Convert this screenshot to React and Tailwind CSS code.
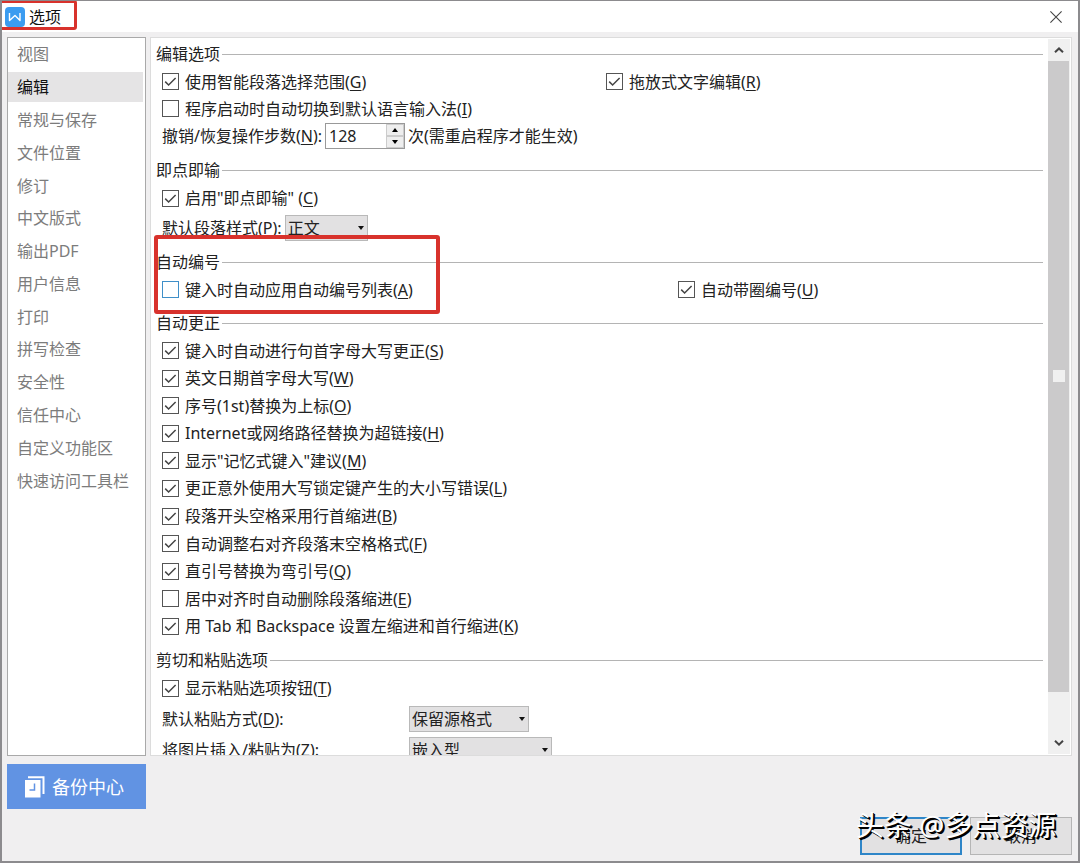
import React from "react";

const categories = [
  "视图", "编辑", "常规与保存", "文件位置", "修订", "中文版式", "输出PDF",
  "用户信息", "打印", "拼写检查", "安全性", "信任中心", "自定义功能区", "快速访问工具栏",
];

const corrections = [
  ["键入时自动进行句首字母大写更正", "S", true],
  ["英文日期首字母大写", "W", true],
  ["序号(1st)替换为上标", "O", true],
  ["Internet或网络路径替换为超链接", "H", true],
  ["显示\"记忆式键入\"建议", "M", true],
  ["更正意外使用大写锁定键产生的大小写错误", "L", true],
  ["段落开头空格采用行首缩进", "B", true],
  ["自动调整右对齐段落末空格格式", "F", true],
  ["直引号替换为弯引号", "Q", true],
  ["居中对齐时自动删除段落缩进", "E", false],
  ["用 Tab 和 Backspace 设置左缩进和首行缩进", "K", true],
];

function Key({ k }) {
  return <>(<u className="underline decoration-1 underline-offset-2">{k}</u>)</>;
}

function Check({ text, k, checked = false, focused = false }) {
  return (
    <label className="inline-flex items-center gap-1.5 whitespace-nowrap">
      <span className="grid size-[17px] shrink-0">
        <input
          type="checkbox"
          defaultChecked={checked}
          className={
            "peer col-start-1 row-start-1 size-[17px] appearance-none border bg-white " +
            (focused ? "border-[#3f8fc8]" : "border-[#555555]")
          }
        />
        <svg viewBox="0 0 17 17" className="pointer-events-none invisible col-start-1 row-start-1 size-[17px] peer-checked:visible" fill="none" stroke="#444" strokeWidth="1.5">
          <path d="M3.2 8.6 6.6 12 13.6 5" />
        </svg>
      </span>
      <span>{text}<Key k={k} /></span>
    </label>
  );
}

function Section({ title, children }) {
  return (
    <section className="relative">
      <div className="flex h-7 items-center gap-0.5">
        <h2 className="whitespace-nowrap">{title}</h2>
        <div className="h-px flex-1 bg-[#b4b4b4]" />
      </div>
      {children}
    </section>
  );
}

function Select({ id, options, className }) {
  return (
    <span className={"grid h-[26px] " + className}>
      <select id={id} className="col-start-1 row-start-1 w-full appearance-none border border-[#b9b9b9] bg-[#e2e1e2] pl-0.5 leading-6 text-[#222]">
        {options.map((o) => <option key={o}>{o}</option>)}
      </select>
      <svg viewBox="0 0 6 4" className="pointer-events-none col-start-1 row-start-1 mr-1 h-1 w-1.5 self-center justify-self-end" fill="#111">
        <path d="M0 0h6L3 4z" />
      </svg>
    </span>
  );
}

export default function App() {
  return (
    <div className="relative flex h-screen flex-col overflow-hidden border-x-2 border-t border-b-2 border-[#8c8b8e] bg-[#f0eff0] font-['Noto_Sans','Noto_Sans_CJK_SC',sans-serif] text-[16px] leading-6 text-[#222]">
      <header className="flex h-[31px] shrink-0 items-center justify-between bg-white pr-3.5 pl-[3px]">
        <div className="flex items-center gap-1">
          <svg viewBox="0 0 20 20" className="size-5">
            <rect width="20" height="20" rx="4" fill="#3b9cf0" />
            <path d="M4.5 6v7.5L10 8.5l5 5V6" fill="none" stroke="#fff" strokeWidth="1.4" strokeLinejoin="round" />
          </svg>
          <h1 className="text-[#111]">选项</h1>
        </div>
        <button aria-label="关闭" className="p-0.5">
          <svg viewBox="0 0 12 12" className="size-3" stroke="#444" strokeWidth="1.1">
            <path d="M.4.4l11.2 11.2M11.6.4.4 11.6" />
          </svg>
        </button>
      </header>

      <div className="flex min-h-0 flex-1 gap-1 pt-[5px] pr-1.5 pl-[5px]">
        <nav className="w-[139px] shrink-0 border border-[#a9a9a9] bg-white">
          <ul className="grid h-[459px] auto-rows-fr">
            {categories.map((c, i) => (
              <li key={c} className="flex items-center pr-0.5">
                <button
                  className={
                    "h-[30px] w-full pl-[9px] text-left whitespace-nowrap " +
                    (i === 1 ? "bg-[#e5e4e5] text-[#111]" : "text-[#7c7c7c]")
                  }
                >
                  {c}
                </button>
              </li>
            ))}
          </ul>
        </nav>

        <main className="flex min-w-0 flex-1 border border-[#dcdcdc] bg-white">
          <div className="flex min-w-0 flex-1 flex-col gap-1.5 overflow-hidden pt-0.5 pr-[5px] pl-[5px]">
            <Section title="编辑选项">
              <div className="grid h-[82px] auto-rows-fr pl-1.5">
                <div className="flex items-center">
                  <div className="flex w-[444px]"><Check text="使用智能段落选择范围" k="G" checked /></div>
                  <Check text="拖放式文字编辑" k="R" checked />
                </div>
                <div className="flex items-center"><Check text="程序启动时自动切换到默认语言输入法" k="I" /></div>
                <div className="flex items-center gap-[3px]">
                  <label htmlFor="undo">撤销/恢复操作步数<Key k="N" />:</label>
                  <div className="flex h-[26px] w-20 border border-[#999] bg-white">
                    <input id="undo" defaultValue="128" className="w-0 flex-1 pl-[3px]" />
                    <div className="flex w-[18px] flex-col">
                      <button aria-label="增加" className="flex flex-1 items-center justify-center border border-[#ccc] bg-[#eee]">
                        <svg viewBox="0 0 6 4" className="h-1 w-1.5"><path d="M0 4h6L3 0z" /></svg>
                      </button>
                      <button aria-label="减少" className="flex flex-1 items-center justify-center border border-[#ccc] bg-[#eee]">
                        <svg viewBox="0 0 6 4" className="h-1 w-1.5"><path d="M0 0h6L3 4z" /></svg>
                      </button>
                    </div>
                  </div>
                  <span>次(需重启程序才能生效)</span>
                </div>
              </div>
            </Section>

            <Section title="即点即输">
              <div className="flex flex-col gap-0.5 pl-1.5">
                <div className="flex h-7 items-center"><Check text={'启用"即点即输" '} k="C" checked /></div>
                <div className="flex h-7 items-center gap-[3px]">
                  <label htmlFor="style">默认段落样式<Key k="P" />:</label>
                  <Select id="style" options={["正文"]} className="w-[83px]" />
                </div>
              </div>
            </Section>

            <Section title="自动编号">
              <div className="flex h-[27px] items-center pl-1.5">
                <div className="flex w-[516px]"><Check text="键入时自动应用自动编号列表" k="A" focused /></div>
                <Check text="自动带圈编号" k="U" checked />
              </div>
              <div className="pointer-events-none absolute -top-[13px] -left-0.5 h-[79px] w-[286px] rounded-[3px] border-4 border-[#d8322c]" />
            </Section>

            <Section title="自动更正">
              <div className="grid h-[303px] auto-rows-fr pl-1.5">
                {corrections.map(([text, k, on]) => (
                  <div key={k} className="flex items-center"><Check text={text} k={k} checked={on} /></div>
                ))}
              </div>
            </Section>

            <Section title="剪切和粘贴选项">
              <div className="flex flex-col gap-[3px] pl-1.5">
                <div className="flex h-7 items-center"><Check text="显示粘贴选项按钮" k="T" checked /></div>
                <div className="flex h-7 items-center">
                  <label htmlFor="paste" className="w-[247px]">默认粘贴方式<Key k="D" />:</label>
                  <Select id="paste" options={["保留源格式"]} className="w-[120px]" />
                </div>
                <div className="flex h-7 items-center">
                  <label htmlFor="image" className="w-[247px]">将图片插入/粘贴为<Key k="Z" />:</label>
                  <Select id="image" options={["嵌入型"]} className="w-[143px]" />
                </div>
              </div>
            </Section>
          </div>

          <div className="my-px mr-px flex w-[22px] shrink-0 flex-col bg-[#f0f0f0]">
            <button aria-label="向上滚动" className="flex h-[22px] items-center justify-center">
              <svg viewBox="0 0 10 6" className="h-1.5 w-2.5" fill="none" stroke="#444" strokeWidth="2"><path d="M1 5.2 5 1.4 9 5.2" /></svg>
            </button>
            <div className="flex-1">
              <div className="mr-px flex h-[94%] items-center justify-center bg-[#cbcacb]">
                <div className="size-3 bg-[#f0f0f0]" />
              </div>
            </div>
            <button aria-label="向下滚动" className="flex h-[22px] items-center justify-center">
              <svg viewBox="0 0 10 6" className="h-1.5 w-2.5" fill="none" stroke="#444" strokeWidth="2"><path d="M1 .8 5 4.6 9 .8" /></svg>
            </button>
          </div>
        </main>
      </div>

      <footer className="flex h-[105px] shrink-0 justify-between pt-2 pr-1.5 pb-1.5 pl-[5px]">
        <button className="flex h-[45px] w-[139px] items-center gap-[7px] bg-[#6193e3] pl-[18px] text-[18px] text-white">
          <svg viewBox="0 0 20 22" className="h-[22px] w-5" fill="none">
            <path d="M3 1.2h15.5V18" stroke="#fff" strokeWidth="2" />
            <path d="M0 4h15.5v17.5H0z" fill="#fff" />
            <path d="M9.5 7.5V14H4.5" stroke="#6193e3" strokeWidth="1.5" />
          </svg>
          备份中心
        </button>
        <div className="relative flex items-end gap-2">
          <button className="h-[38px] w-[102px] border-2 border-[#2f86c8] bg-[#e2e1e2]">确定</button>
          <button className="h-[38px] w-[102px] border border-[#b5b5b5] bg-[#e2e1e2]">取消</button>
          <div className="pointer-events-none absolute bottom-3 -left-1 text-[28px] leading-9 whitespace-nowrap text-white [text-shadow:1px_1px_0_#000,2px_2px_0_#000]">
            头条 @多点资源
          </div>
        </div>
      </footer>

      <div className="pointer-events-none absolute -top-px -left-[3px] h-[30px] w-[78px] rounded-[3px] border-[3px] border-[#d8322c]" />
    </div>
  );
}
